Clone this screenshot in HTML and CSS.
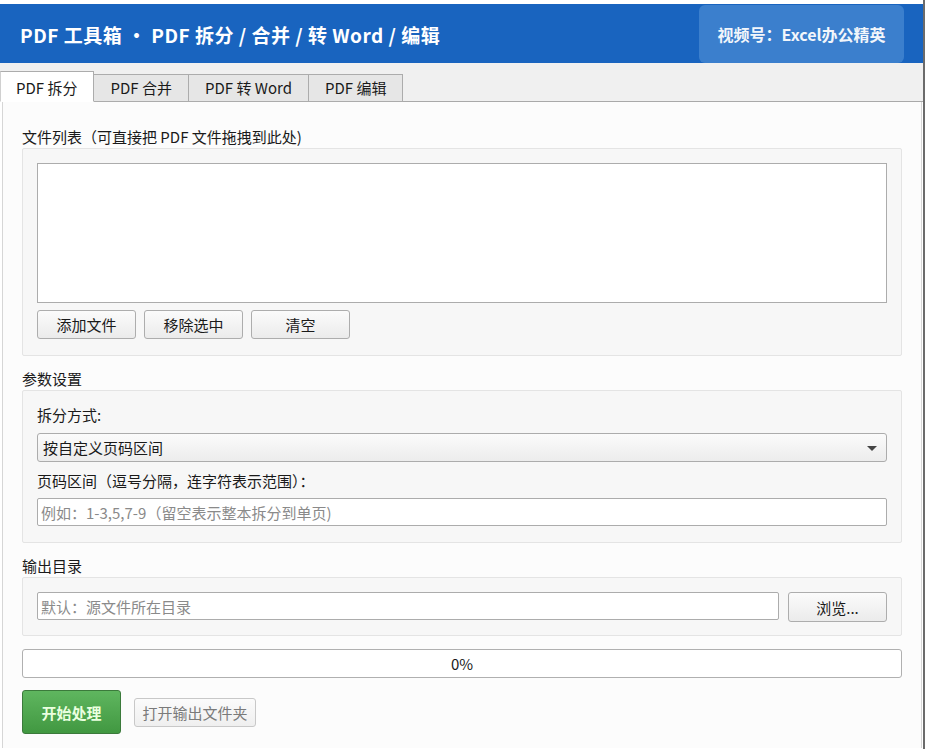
FILE: index.html
```html
<!DOCTYPE html>
<html lang="zh-CN">

<head>
    <meta charset="UTF-8">
    <meta name="viewport" content="width=device-width, initial-scale=1.0">
    <title>PDF 工具箱</title>
    <link rel="stylesheet" href="styles.css">
</head>

<body>
    <div class="app">
        <div class="header">
            <h1 class="title">PDF 工具箱 ・ PDF 拆分 / 合并 / 转 Word / 编辑</h1>
            <div class="badge">视频号：Excel办公精英</div>
        </div>

        <div class="tabs">
            <button class="tab active">PDF 拆分</button>
            <button class="tab">PDF 合并</button>
            <button class="tab">PDF 转 Word</button>
            <button class="tab">PDF 编辑</button>
        </div>

        <div class="panel">
            <p class="section-label">文件列表（可直接把 PDF 文件拖拽到此处)</p>
            <div class="group">
                <div class="file-list"></div>
                <div class="btn-row">
                    <button class="btn">添加文件</button>
                    <button class="btn">移除选中</button>
                    <button class="btn">清空</button>
                </div>
            </div>

            <p class="section-label">参数设置</p>
            <div class="group">
                <p class="field-label">拆分方式:</p>
                <div class="combo">按自定义页码区间</div>
                <p class="field-label">页码区间（逗号分隔，连字符表示范围）：</p>
                <input class="text-input" type="text" placeholder="例如：1-3,5,7-9（留空表示整本拆分到单页)">
            </div>

            <p class="section-label">输出目录</p>
            <div class="group group-row">
                <input class="text-input dir-input" type="text" placeholder="默认：源文件所在目录">
                <button class="btn browse">浏览...</button>
            </div>

            <div class="progress">0%</div>

            <div class="actions">
                <button class="btn-start">开始处理</button>
                <button class="btn open" disabled>打开输出文件夹</button>
            </div>
        </div>
    </div>
</body>

</html>
```

FILE: styles.css
```css
*{
    margin: 0;
    padding: 0;
    box-sizing: border-box;
}
body{
    background-color: #fff;
    font-family: "Noto Sans CJK SC", "Noto Sans", sans-serif;
    font-size: 15px;
    color: #1a1a1a;
}
.app{
    width: 925px;
    height: 749px;
    padding-top: 4px;
    border-right: 2px solid #6b6b6b;
    overflow: hidden;
}
.header{
    height: 59px;
    background-color: #1964bf;
    display: flex;
    align-items: center;
    justify-content: space-between;
    padding: 0 19px 0 20px;
}
.title{
    color: #fff;
    font-size: 19px;
    font-weight: 700;
    line-height: 24px;
    letter-spacing: 0.5px;
    margin-top: 2px;
}
.badge{
    width: 205px;
    height: 58px;
    margin-top: 1px;
    border-radius: 6px;
    background-color: #3b7fcd;
    color: #f2f6fb;
    font-size: 16px;
    font-weight: 700;
    display: flex;
    align-items: center;
    justify-content: center;
}
.tabs{
    height: 39px;
    background-color: #f0f0f0;
    border-bottom: 1px solid #a9a9a9;
    display: flex;
    align-items: flex-end;
}
.tab{
    height: 28px;
    margin-bottom: -1px;
    padding: 0 16px;
    font-family: inherit;
    font-size: 15px;
    color: #1a1a1a;
    background-color: #e6e6e6;
    border: 1px solid #acacac;
    border-left: none;
    line-height: 26px;
}
.tab.active{
    height: 31px;
    padding: 2px 16px 0 15px;
    background-color: #fff;
    border-left: 1px solid #d0d0d0;
    border-bottom-color: #fff;
}
.panel{
    height: 646px;
    margin-left: 2px;
    margin-right: 1px;
    background-color: #fcfcfc;
    border-left: 1px solid #d6d6d6;
    border-right: 1px solid #d6d6d6;
    padding: 25px 19px 0 19px;
}
.section-label{
    line-height: 20px;
    margin-bottom: 1px;
}
.group{
    background-color: #f7f7f7;
    border: 1px solid #e4e4e4;
    border-radius: 2px;
    padding: 14px 14px 16px 14px;
    margin-bottom: 13px;
}
.file-list{
    height: 140px;
    background-color: #fff;
    border: 1px solid #acacac;
}
.btn-row{
    display: flex;
    gap: 8px;
    margin-top: 7px;
}
.btn{
    width: 99px;
    height: 29px;
    font-family: inherit;
    font-size: 15px;
    color: #1a1a1a;
    border: 1px solid #adadad;
    border-radius: 3px;
    background: linear-gradient(#fbfbfb, #ebebeb);
}
.field-label{
    line-height: 20px;
}
.combo{
    position: relative;
    height: 29px;
    margin: 8px 0 9px;
    padding-left: 5px;
    line-height: 27px;
    border: 1px solid #acacac;
    border-radius: 3px;
    background: linear-gradient(#fbfbfb, #ececec);
}
.combo::after{
    content: "";
    position: absolute;
    right: 9px;
    top: 12px;
    border-left: 5px solid transparent;
    border-right: 5px solid transparent;
    border-top: 5px solid #444;
}
.text-input{
    display: block;
    width: 100%;
    height: 28px;
    margin-top: 7px;
    padding-left: 3px;
    font-family: inherit;
    font-size: 15px;
    background-color: #fff;
    border: 1px solid #acacac;
    border-radius: 2px;
    outline: none;
}
.text-input::placeholder{
    color: #8a8a8a;
}
.group-row{
    display: flex;
    align-items: flex-start;
    gap: 9px;
    padding-bottom: 13px;
    margin-bottom: 13px;
}
.dir-input{
    flex: 1;
    margin-top: 0;
}
.browse{
    flex: none;
    height: 30px;
}
.progress{
    height: 29px;
    background-color: #fff;
    border: 1px solid #b0b0b0;
    border-radius: 3px;
    text-align: center;
    line-height: 27px;
}
.actions{
    display: flex;
    align-items: center;
    gap: 13px;
    margin-top: 12px;
}
.btn-start{
    width: 99px;
    height: 44px;
    font-family: inherit;
    font-size: 15px;
    font-weight: 700;
    color: #eaffdf;
    border: 1px solid #3b7a3b;
    border-radius: 3px;
    background: linear-gradient(#5fb65f, #419841);
}
.btn.open{
    width: 122px;
    color: #7a7a7a;
    border-color: #c8c8c8;
    background: linear-gradient(#fbfbfb, #efefef);
}
```
